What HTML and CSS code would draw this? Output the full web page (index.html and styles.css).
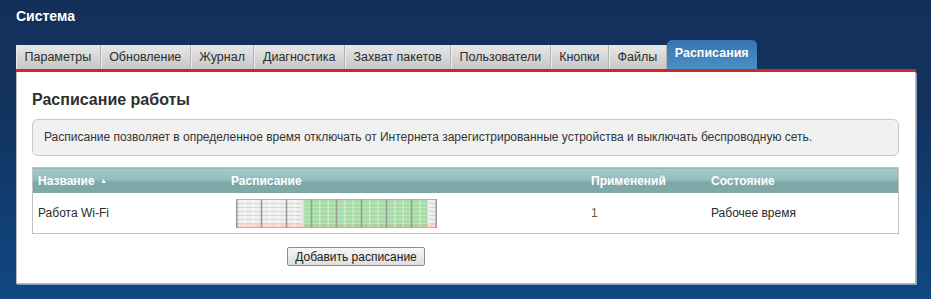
FILE: index.html
```html
<!DOCTYPE html>
<html>
<head>
 <meta charset="utf-8">
 <link rel="stylesheet" href="styles.css">
</head>
<body>
<div class="page-title">Система</div>

<ul class="tabs">
   <li class="tab">Параметры</li>
   <li class="tab">Обновление</li>
   <li class="tab">Журнал</li>
   <li class="tab">Диагностика</li>
   <li class="tab">Захват пакетов</li>
   <li class="tab">Пользователи</li>
   <li class="tab">Кнопки</li>
   <li class="tab">Файлы</li>
   <li class="tab tab-active">Расписания</li>
</ul>

<div class="panel">
   <h2 class="panel-title">Расписание работы</h2>

   <div class="info-box">Расписание позволяет в определенное время отключать от Интернета зарегистрированные устройства и выключать беспроводную сеть.</div>

   <table class="sched-table">
      <thead>
         <tr>
            <th class="col-name">Название <span class="sort-arrow">▲</span></th>
            <th class="col-sched">Расписание</th>
            <th class="col-uses">Применений</th>
            <th>Состояние</th>
         </tr>
      </thead>
      <tbody>
         <tr>
            <td>Работа Wi-Fi</td>
            <td>
               <svg class="sched-chart" width="202" height="29" viewBox="0 0 202 29">
                  <!-- cells -->
                  <rect x="0" y="0" width="201" height="29" fill="#efefef"/>
                  <rect x="66.7" y="0" width="125" height="29" fill="#a8dba8"/>
                  <!-- bottom row -->
                  <rect x="0" y="24" width="66.7" height="4" fill="#fdd2cd"/>
                  <rect x="191.7" y="24" width="9.3" height="4" fill="#fdd2cd"/>
                  <rect x="66.7" y="24" width="125" height="4" fill="#b3cd9c"/>
                  <!-- day lines -->
                  <path d="M0 4.5H201M0 8.5H201M0 12.5H201M0 16.5H201M0 20.5H201M0 24.5H201" stroke="#c4e2c4" stroke-width="1"/>
                  <path d="M0 0.5H201M0 28.5H201" stroke="#94cc94" stroke-width="1"/>
                  <!-- hour lines -->
                  <path d="M8.8 1V28M17.2 1V28M33.8 1V28M42.2 1V28M58.8 1V28M67.2 1V28M83.8 1V28M92.2 1V28M108.8 1V28M117.2 1V28M133.8 1V28M142.2 1V28M158.8 1V28M167.2 1V28M183.8 1V28M192.2 1V28" stroke="#ffffff" stroke-opacity="0.55" stroke-width="1"/>
                  <!-- 3 hour lines -->
                  <path d="M0.75 0V29M25.5 0V29M50.5 0V29M75.5 0V29M100.5 0V29M125.5 0V29M150.5 0V29M175.5 0V29M200.25 0V29" stroke="#999999" stroke-width="1.5"/>
               </svg>
            </td>
            <td class="uses">1</td>
            <td>Рабочее время</td>
         </tr>
      </tbody>
   </table>

   <button class="add-btn">Добавить расписание</button>
</div>
</body>
</html>
```

FILE: styles.css
```css
html {
   height: 100%;
}
body {
   margin: 0;
   padding: 0 15px 0 16px;
   min-height: 100%;
   box-sizing: border-box;
   font-family: "Liberation Sans", Arial, sans-serif;
   font-size: 12px;
   color: #2b2b2b;
   background: linear-gradient(to bottom, #12305a 0%, #12325e 35%, #104782 100%);
}

.page-title {
   padding-top: 8px;
   margin-bottom: 16px;
   line-height: 16px;
   font-size: 14px;
   font-weight: bold;
   color: #fff;
}

/* tabs */
.tabs {
   display: flex;
   align-items: flex-end;
   margin: 0;
   padding: 0;
   list-style: none;
   border-bottom: 3px solid #cf272c;
}
.tab {
   height: 24px;
   line-height: 24px;
   padding: 0 8.5px;
   font-size: 12.5px;
   color: #2d2d2d;
   background: linear-gradient(to bottom, #e8e8e8, #c6c6c6);
   border-right: 1px solid #b2b2b2;
   box-shadow: inset 1px 0 0 #ececec;
}
.tab-active {
   height: 29px;
   line-height: 26px;
   padding: 0 8px;
   margin-left: 0;
   font-weight: bold;
   color: #fff;
   border-right: none;
   border-radius: 5px 5px 0 0;
   background: linear-gradient(to bottom, #3574ad, #4a90c6);
   box-shadow: none;
}

/* panel */
.panel {
   background: #fff;
   border: 1px solid #b9b9b9;
   border-top: none;
   padding: 18px 16px 17px 15px;
   box-shadow: 1px 1px 0 #8a9cb3;
}
.panel-title {
   margin: 0 0 9px;
   line-height: 20px;
   font-size: 16px;
   color: #2f2f2f;
}

.info-box {
   line-height: 35px;
   padding: 0 11px;
   background: #f1f1f1;
   border: 1px solid #c8c8c8;
   border-radius: 6px;
   color: #333;
}

/* table */
.sched-table {
   width: 100%;
   margin-top: 11px;
   border-collapse: collapse;
   border: 1px solid #c2c2c2;
}
.sched-table th {
   height: 25px;
   padding: 0 5px;
   text-align: left;
   color: #fff;
   font-weight: bold;
   background: linear-gradient(to bottom, #a4cacc, #93bcbd 45%, #7ea8a8 55%, #7fa9a9);
}
.sched-table td {
   height: 40px;
   padding: 0 5px;
   vertical-align: middle;
}
.col-name {
   width: 183px;
}
.col-sched {
   width: 350px;
}
.col-uses {
   width: 110px;
}
.sort-arrow {
   font-size: 7px;
   vertical-align: 2px;
   margin-left: 2px;
}
.sched-chart {
   display: block;
   margin: 1px 0 0 5px;
}
.uses {
   color: #6e5a22;
}

.add-btn {
   display: block;
   margin: 13px 0 0 255px;
   width: 138px;
   height: 19px;
   padding: 0;
   font-family: "Liberation Sans", Arial, sans-serif;
   font-size: 12px;
   color: #222;
   background: linear-gradient(to bottom, #f6f6f6, #dedede);
   border: 1px solid #8c8c8c;
   border-radius: 2px;
}
```
